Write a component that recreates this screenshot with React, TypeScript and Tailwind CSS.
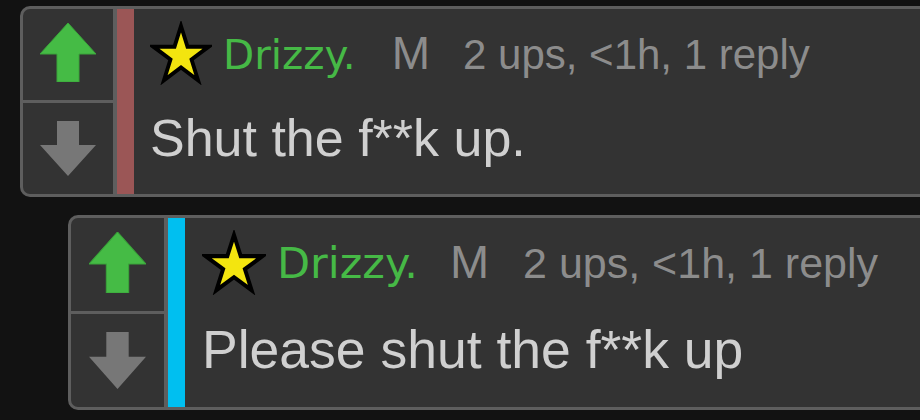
import React from "react";

function Star({ w, h }: { w: number; h: number }) {
  return (
    <svg width={w} height={h} viewBox="0 0 64 64" preserveAspectRatio="none" className="shrink-0">
      <polygon
        points="32,5 38.7,25.7 60.5,25.7 42.9,38.5 49.6,59.3 32,46.5 14.4,59.3 21.1,38.5 3.5,25.7 25.3,25.7"
        fill="#f3e50f"
        stroke="#000"
        strokeWidth={4}
        strokeLinejoin="miter"
      />
    </svg>
  );
}

function Up({ w, h }: { w: number; h: number }) {
  return (
    <svg width={w} height={h} viewBox="0 0 56 59" preserveAspectRatio="none">
      <polygon points="28,0 56,31 39,31 39,59 17,59 17,31 0,31" fill="#45bb45" stroke="#3aa53a" strokeWidth={1} />
    </svg>
  );
}

function Down({ w, h }: { w: number; h: number }) {
  return (
    <svg width={w} height={h} viewBox="0 0 56 55" preserveAspectRatio="none">
      <polygon points="17,0 39,0 39,24 56,24 28,55 0,24 17,24" fill="#777777" />
    </svg>
  );
}

export default function App() {
  return (
    <div className="w-[920px] h-[420px] overflow-hidden bg-[#121212] flex flex-col">
      {/* Card 1 */}
      <div className="ml-[20px] mt-[6px] w-[1000px] h-[191px] shrink-0 border-[3px] border-[#5e5e5e] rounded-[10px] bg-[#333333] flex overflow-hidden">
        <div className="w-[90px] shrink-0 flex flex-col">
          <div className="h-[91px] flex items-center justify-center pb-[4px]">
            <Up w={56} h={59} />
          </div>
          <div className="h-[3px] bg-[#5e5e5e]" />
          <div className="flex-1 flex items-center justify-center">
            <Down w={56} h={55} />
          </div>
        </div>
        <div className="w-[4px] shrink-0 bg-[#5e5e5e]" />
        <div className="w-[17px] shrink-0 bg-[#9b5656]" />
        <div className="pl-[16px] pt-[12px] flex flex-col">
          <div className="h-[64px] flex items-center">
            <Star w={62} h={64} />
            <div className="flex items-baseline ml-[11px] whitespace-nowrap">
              <span className="font-['DejaVu_Sans',sans-serif] text-[40.5px] leading-normal text-[#46b946]">Drizzy.</span>
              <span className="ml-[36px] font-['Liberation_Sans',Arial,sans-serif] text-[46px] leading-normal text-[#8c8c8c]">M</span>
              <span className="ml-[33px] font-['Liberation_Sans',Arial,sans-serif] text-[42px] leading-normal text-[#8c8c8c]">2 ups, &lt;1h, 1 reply</span>
            </div>
          </div>
          <div className="mt-[27px] font-['Liberation_Sans',Arial,sans-serif] text-[52px] leading-none text-[#d0d0d0] whitespace-nowrap">
            Shut the f**k up.
          </div>
        </div>
      </div>

      {/* Card 2 */}
      <div className="ml-[68px] mt-[18px] w-[1000px] h-[195px] shrink-0 border-[3px] border-[#5e5e5e] rounded-[10px] bg-[#333333] flex overflow-hidden">
        <div className="w-[93px] shrink-0 flex flex-col">
          <div className="h-[93px] flex items-center justify-center pb-[4px]">
            <Up w={57} h={61} />
          </div>
          <div className="h-[3px] bg-[#5e5e5e]" />
          <div className="flex-1 flex items-center justify-center">
            <Down w={57} h={57} />
          </div>
        </div>
        <div className="w-[4px] shrink-0 bg-[#5e5e5e]" />
        <div className="w-[17px] shrink-0 bg-[#00bff0]" />
        <div className="pl-[17px] pt-[12px] flex flex-col">
          <div className="h-[65px] flex items-center">
            <Star w={64} h={65} />
            <div className="flex items-baseline ml-[11px] whitespace-nowrap">
              <span className="font-['DejaVu_Sans',sans-serif] text-[43px] leading-normal text-[#46b946]">Drizzy.</span>
              <span className="ml-[32px] font-['Liberation_Sans',Arial,sans-serif] text-[47px] leading-normal text-[#8c8c8c]">M</span>
              <span className="ml-[34px] font-['Liberation_Sans',Arial,sans-serif] text-[43px] leading-normal text-[#8c8c8c]">2 ups, &lt;1h, 1 reply</span>
            </div>
          </div>
          <div className="mt-[28px] font-['Liberation_Sans',Arial,sans-serif] text-[53.5px] leading-none text-[#d0d0d0] whitespace-nowrap">
            Please shut the f**k up
          </div>
        </div>
      </div>
    </div>
  );
}
